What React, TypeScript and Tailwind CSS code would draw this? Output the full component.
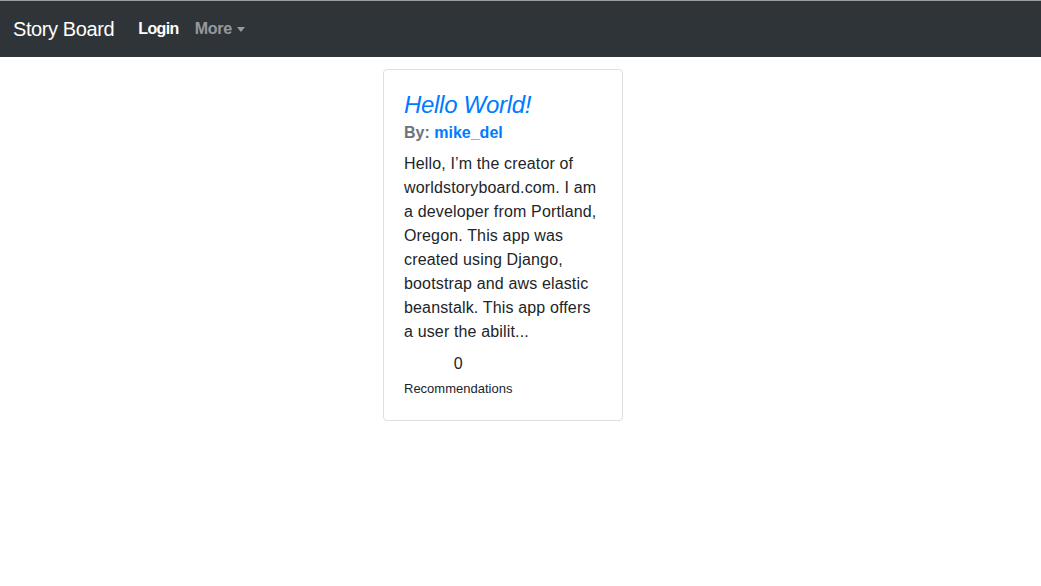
export default function App() {
  return (
    <div className="min-h-[586px] bg-white font-['Liberation_Sans',Arial,sans-serif] text-[#212529]">
      <nav className="flex h-[57px] items-center border-t border-t-[#9c9c9c] bg-[#2f3438] px-[13px]">
        <a className="mr-[24px] text-[20px] tracking-[-0.4px] text-white">Story Board</a>
        <a className="mr-[16px] text-[16px] font-bold tracking-[-0.6px] text-white">Login</a>
        <a className="flex items-center text-[16px] font-bold tracking-[-0.3px] text-white/50">
          More
          <span className="ml-[5px] mt-[1px] inline-block border-x-[4.5px] border-t-[5px] border-x-transparent border-t-white/50" />
        </a>
      </nav>
      <div className="pl-[383px] pt-[12px]">
        <div className="w-[240px] rounded-[4px] border border-[#dfdfdf] px-[20px] pb-[20px] pt-[20px]">
          <h5 className="text-[24px] italic leading-[29px] tracking-[-0.3px] text-[#007bff]">Hello World!</h5>
          <div className="mt-[3px] text-[16px] font-bold leading-[22px] text-[#6c757d]">
            By: <a className="text-[#007bff]">mike_del</a>
          </div>
          <p className="mt-[8px] text-[16px] leading-[24px] tracking-[0.15px]">
            Hello, I’m the creator of worldstoryboard.com. I am a developer from Portland, Oregon. This app was created
            using Django, bootstrap and aws elastic beanstalk. This app offers a user the abilit...
          </p>
          <div className="mt-[8px] inline-block text-center">
            <div className="text-[16px] leading-[24px]">0</div>
            <div className="mt-[3px] text-[13px] leading-[20px]">Recommendations</div>
          </div>
        </div>
      </div>
    </div>
  )
}
